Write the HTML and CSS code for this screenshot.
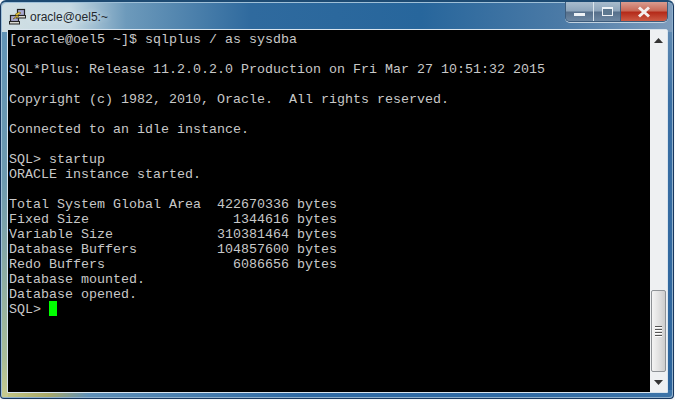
FILE: index.html
```html
<!DOCTYPE html>
<html lang="en">
<head>
<meta charset="utf-8">
<title>oracle@oel5:~</title>
<link rel="stylesheet" href="styles.css">
</head>
<body>
<div class="window">
  <header class="titlebar">
    <svg class="appicon" width="17" height="17" viewBox="0 0 17 17">
      <rect x="1.5" y="7.5" width="8" height="6" fill="#a8a8d0" stroke="#222" stroke-width="1.2"/>
      <rect x="0.5" y="13.5" width="10" height="2.5" fill="#d8d8d0" stroke="#222" stroke-width="1"/>
      <rect x="8.5" y="1.5" width="7" height="6" fill="#a8a8d0" stroke="#222" stroke-width="1.2"/>
      <rect x="7.5" y="7.5" width="9" height="2.5" fill="#d8d8d0" stroke="#222" stroke-width="1"/>
      <path d="M10 4 L6 6.5 L8 7.5 L4 11 L10 8.5 L8 7.5 L12 5 Z" fill="#f0d040" stroke="#6a5410" stroke-width="0.6"/>
    </svg>
    <span class="title">oracle@oel5:~</span>
    <div class="controls">
      <div class="btn min"><span class="min-glyph"></span></div>
      <div class="btn max"><span class="max-glyph"></span></div>
      <div class="btn close"><svg width="14" height="12" viewBox="0 0 14 12"><path d="M2 1.5 L12 10.5 M12 1.5 L2 10.5" stroke="#f4eeee" stroke-width="3"/></svg></div>
    </div>
  </header>
  <main class="client">
<pre class="terminal">[oracle@oel5 ~]$ sqlplus / as sysdba

SQL*Plus: Release 11.2.0.2.0 Production on Fri Mar 27 10:51:32 2015

Copyright (c) 1982, 2010, Oracle.  All rights reserved.

Connected to an idle instance.

SQL&gt; startup
ORACLE instance started.

Total System Global Area  422670336 bytes
Fixed Size                  1344616 bytes
Variable Size             310381464 bytes
Database Buffers          104857600 bytes
Redo Buffers                6086656 bytes
Database mounted.
Database opened.
SQL&gt; <span class="cursor"> </span></pre>
    <aside class="scrollbar">
      <svg class="arrow" width="9" height="5" viewBox="0 0 9 5"><path d="M4.5 0 L9 5 L0 5 Z" fill="#333"/></svg>
      <div class="track"></div>
      <div class="thumb"><span class="grip"></span><span class="grip"></span><span class="grip"></span><span class="grip"></span></div>
      <svg class="arrow" width="9" height="5" viewBox="0 0 9 5"><path d="M4.5 5 L9 0 L0 0 Z" fill="#333"/></svg>
    </aside>
  </main>
</div>
</body>
</html>
```
FILE: styles.css
```css
html, body { margin: 0; padding: 0; width: 675px; height: 400px; overflow: hidden; background: #f4f6f8; }
.window {
  box-sizing: border-box;
  width: 674px; height: 399px;
  padding: 0 5px 5px 6px;
  display: flex; flex-direction: column;
  border: 1px solid #17375f;
  border-top: 2px solid #1d4a72;
  border-radius: 6px 6px 4px 4px;
  box-shadow: inset 1px 1px 0 #9fc0d8, inset -1px -1px 0 #8fb0cc;
  background:
    linear-gradient(90deg, #d2e0e4 0, #c4d8e2 70px, #6d9abb 125px, #2f6a9e 250px, #27669c 420px, #4b7aa6 560px, #7f9dbd 674px) top / 100% 30px no-repeat,
    linear-gradient(180deg, #5f93b8 0, #6d9ab0 45%, #a9bd98 90%, #c8cc90 100%) left / 7px 100% no-repeat,
    linear-gradient(90deg, #c4c888 0, #a8a868 7%, #5f90b8 13%, #2f6aa4 45%, #2f6aa4 75%, #3d74a8 100%) bottom / 100% 8px no-repeat,
    linear-gradient(180deg, #6f95b8 0, #3a6fa4 25%, #2c649c 100%);
}
.titlebar {
  height: 27px; flex: none;
  display: flex; align-items: flex-start;
  position: relative;
}
.appicon { margin: 6px 0 0 2px; flex: none; }
.title {
  font: 12px/1 "Liberation Sans", Arial, sans-serif;
  color: #23282e;
  margin: 9px 0 0 4px;
  text-shadow: 0 0 6px #e8f2f6;
}
.controls {
  margin-left: auto; margin-right: 0;
  display: flex; height: 19px;
  border: 1px solid #3d5c7c; border-top: 0;
  border-radius: 0 0 5px 5px;
  overflow: hidden;
  box-shadow: 0 1px 0 #c2d2e0;
}
.btn { display: flex; align-items: center; justify-content: center; height: 19px; }
.min { width: 27px; background: linear-gradient(#a9bccd, #8da4ba 48%, #566f8a 52%, #6d87a2); border-right: 1px solid #dbe5ec; }
.max { width: 26px; background: linear-gradient(#a9bccd, #8da4ba 48%, #566f8a 52%, #6d87a2); border-right: 1px solid #3d5c7c; }
.close { width: 46px; background: linear-gradient(#d99c90, #c86a58 45%, #b52b1a 55%, #cc5a44); }
.min-glyph { display: block; width: 11px; height: 3px; background: #eef2f6; margin-top: 5px; }
.max-glyph { box-sizing: border-box; display: block; width: 11px; height: 9px; border: 1px solid #eef2f6; border-top-width: 2px; background: #5d7890; }
.client { flex: 1; min-height: 0; display: flex; border: 1px solid #d8e4ee; border-radius: 2px 2px 0 0; }
.terminal {
  flex: 1; margin: 0;
  padding: 2px 0 0 1px;
  background: #000;
  color: #c8c8c8;
  font: 13.33px/15px "Liberation Mono", "Courier New", monospace;
  overflow: hidden;
}
.cursor { display: inline-block; width: 8px; height: 15px; margin-top: -1px; background: #00ff00; vertical-align: top; }
.scrollbar {
  width: 17px; flex: none;
  background: #eef0f2;
  display: flex; flex-direction: column; align-items: center;
}
.arrow { flex: none; margin: 8px 0 7px; }
.track { flex: 1; }
.thumb {
  box-sizing: border-box;
  width: 15px; height: 82px;
  border: 1px solid #8e9296; border-radius: 2px;
  background: linear-gradient(90deg, #f4f4f4, #e2e2e2 50%, #cdcdcd);
  display: flex; flex-direction: column; align-items: center; justify-content: center; gap: 1px;
}
.grip { display: block; width: 7px; height: 1px; background: #555; border-bottom: 1px solid #fff; }
```
